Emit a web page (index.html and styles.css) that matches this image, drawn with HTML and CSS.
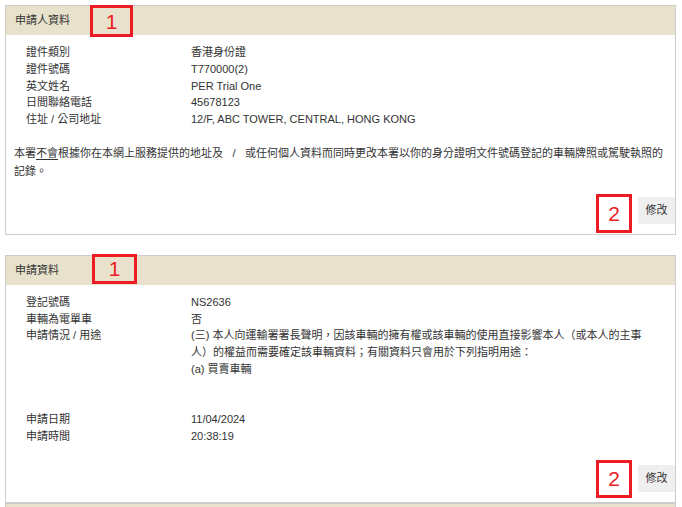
FILE: index.html
```html
<!DOCTYPE html>
<html lang="zh-Hant">
<head>
<meta charset="utf-8">
<title>申請資料</title>
<link rel="stylesheet" href="styles.css">
</head>
<body>
<div class="page">
  <section class="panel panel-applicant">
    <div class="panel-head">申請人資料<span class="mark mark-head mark-head-a">1</span></div>
    <div class="panel-body">
      <dl class="fields">
        <div class="row"><dt>證件類別</dt><dd>香港身份證</dd></div>
        <div class="row"><dt>證件號碼</dt><dd>T770000(2)</dd></div>
        <div class="row"><dt>英文姓名</dt><dd>PER Trial One</dd></div>
        <div class="row"><dt>日間聯絡電話</dt><dd>45678123</dd></div>
        <div class="row"><dt>住址 / 公司地址</dt><dd>12/F, ABC TOWER, CENTRAL, HONG KONG</dd></div>
      </dl>
      <p class="notice">本署<u>不會</u>根據你在本網上服務提供的地址及<span class="sep">/</span>或任何個人資料而同時更改本署以你的身分證明文件號碼登記的車輛牌照或駕駛執照的記錄。</p>
      <div class="actions actions-a">
        <span class="mark mark-foot mark-foot-a">2</span>
        <button class="btn" type="button">修改</button>
      </div>
    </div>
  </section>

  <section class="panel panel-request">
    <div class="panel-head">申請資料<span class="mark mark-head mark-head-b">1</span></div>
    <div class="panel-body">
      <dl class="fields">
        <div class="row"><dt>登記號碼</dt><dd>NS2636</dd></div>
        <div class="row"><dt>車輛為電單車</dt><dd>否</dd></div>
        <div class="row"><dt>申請情況 / 用途</dt><dd>(三) 本人向運輸署署長聲明，因該車輛的擁有權或該車輛的使用直接影響本人（或本人的主事人）的權益而需要確定該車輛資料；有關資料只會用於下列指明用途：<br>(a) 買賣車輛</dd></div>
        <div class="row row-gap"><dt>申請日期</dt><dd>11/04/2024</dd></div>
        <div class="row"><dt>申請時間</dt><dd>20:38:19</dd></div>
      </dl>
      <div class="actions actions-b">
        <span class="mark mark-foot mark-foot-b">2</span>
        <button class="btn" type="button">修改</button>
      </div>
    </div>
  </section>

  <section class="panel panel-next">
    <div class="panel-head"></div>
  </section>
</div>
</body>
</html>
```

FILE: styles.css
```css
html, body {
  margin: 0;
  padding: 0;
  overflow: hidden;
  background: #ffffff;
}

body {
  font-family: "Liberation Sans", "Noto Sans CJK TC", sans-serif;
  font-size: 11px;
  color: #333333;
}

.page {
  padding: 5px 6px 0 5px;
}

.panel {
  position: relative;
  border: 1px solid #cccccc;
  background: #ffffff;
}

.panel-request {
  margin-top: 20px;
}

.panel-next {
  margin-top: 0;
}

.panel-head {
  position: relative;
  height: 29px;
  line-height: 29px;
  padding-left: 9px;
  background: #e8e2cc;
}

.panel-body {
  padding: 9px 0 10px 0;
}

.fields {
  display: grid;
  grid-template-columns: 165px 1fr;
  margin: 0;
  padding: 0 19px 0 20px;
  line-height: 16.75px;
}

.row {
  display: contents;
}

.fields dt,
.fields dd {
  margin: 0;
}

.row-gap dt,
.row-gap dd {
  margin-top: 33.5px;
}

.notice {
  margin: 16.5px 0 0 0;
  padding: 0 8px;
  line-height: 18px;
}

.notice u {
  text-decoration: underline;
  text-underline-offset: 2px;
}

.sep {
  display: inline-block;
  width: 22px;
  text-align: center;
}

.actions {
  position: relative;
  display: flex;
  justify-content: flex-end;
}

.actions-a {
  margin-top: 16.7px;
}

.actions-b {
  margin-top: 20px;
}

.btn {
  width: 37px;
  height: 27px;
  padding: 0;
  border: none;
  background: #efefef;
  color: #333333;
  font-family: "Liberation Sans", "Noto Sans CJK TC", sans-serif;
  font-size: 11px;
  line-height: 27px;
  text-align: center;
}

/* red annotation boxes laid over the content */
.mark {
  position: absolute;
  box-sizing: border-box;
  border: 3px solid #ed1c24;
  color: #ed1c24;
  font-family: "Liberation Sans", sans-serif;
  font-size: 21px;
  display: flex;
  align-items: center;
  justify-content: center;
  line-height: 1;
}

.mark-head-a {
  left: 84px;
  top: -1px;
  width: 43px;
  height: 32px;
}

.mark-head-b {
  left: 86px;
  top: -2px;
  width: 45px;
  height: 30px;
}

.mark-foot {
  right: 43px;
  width: 36px;
}

.mark-foot-a {
  top: -3px;
  height: 39px;
}

.mark-foot-b {
  top: -5px;
  height: 38px;
}
```
